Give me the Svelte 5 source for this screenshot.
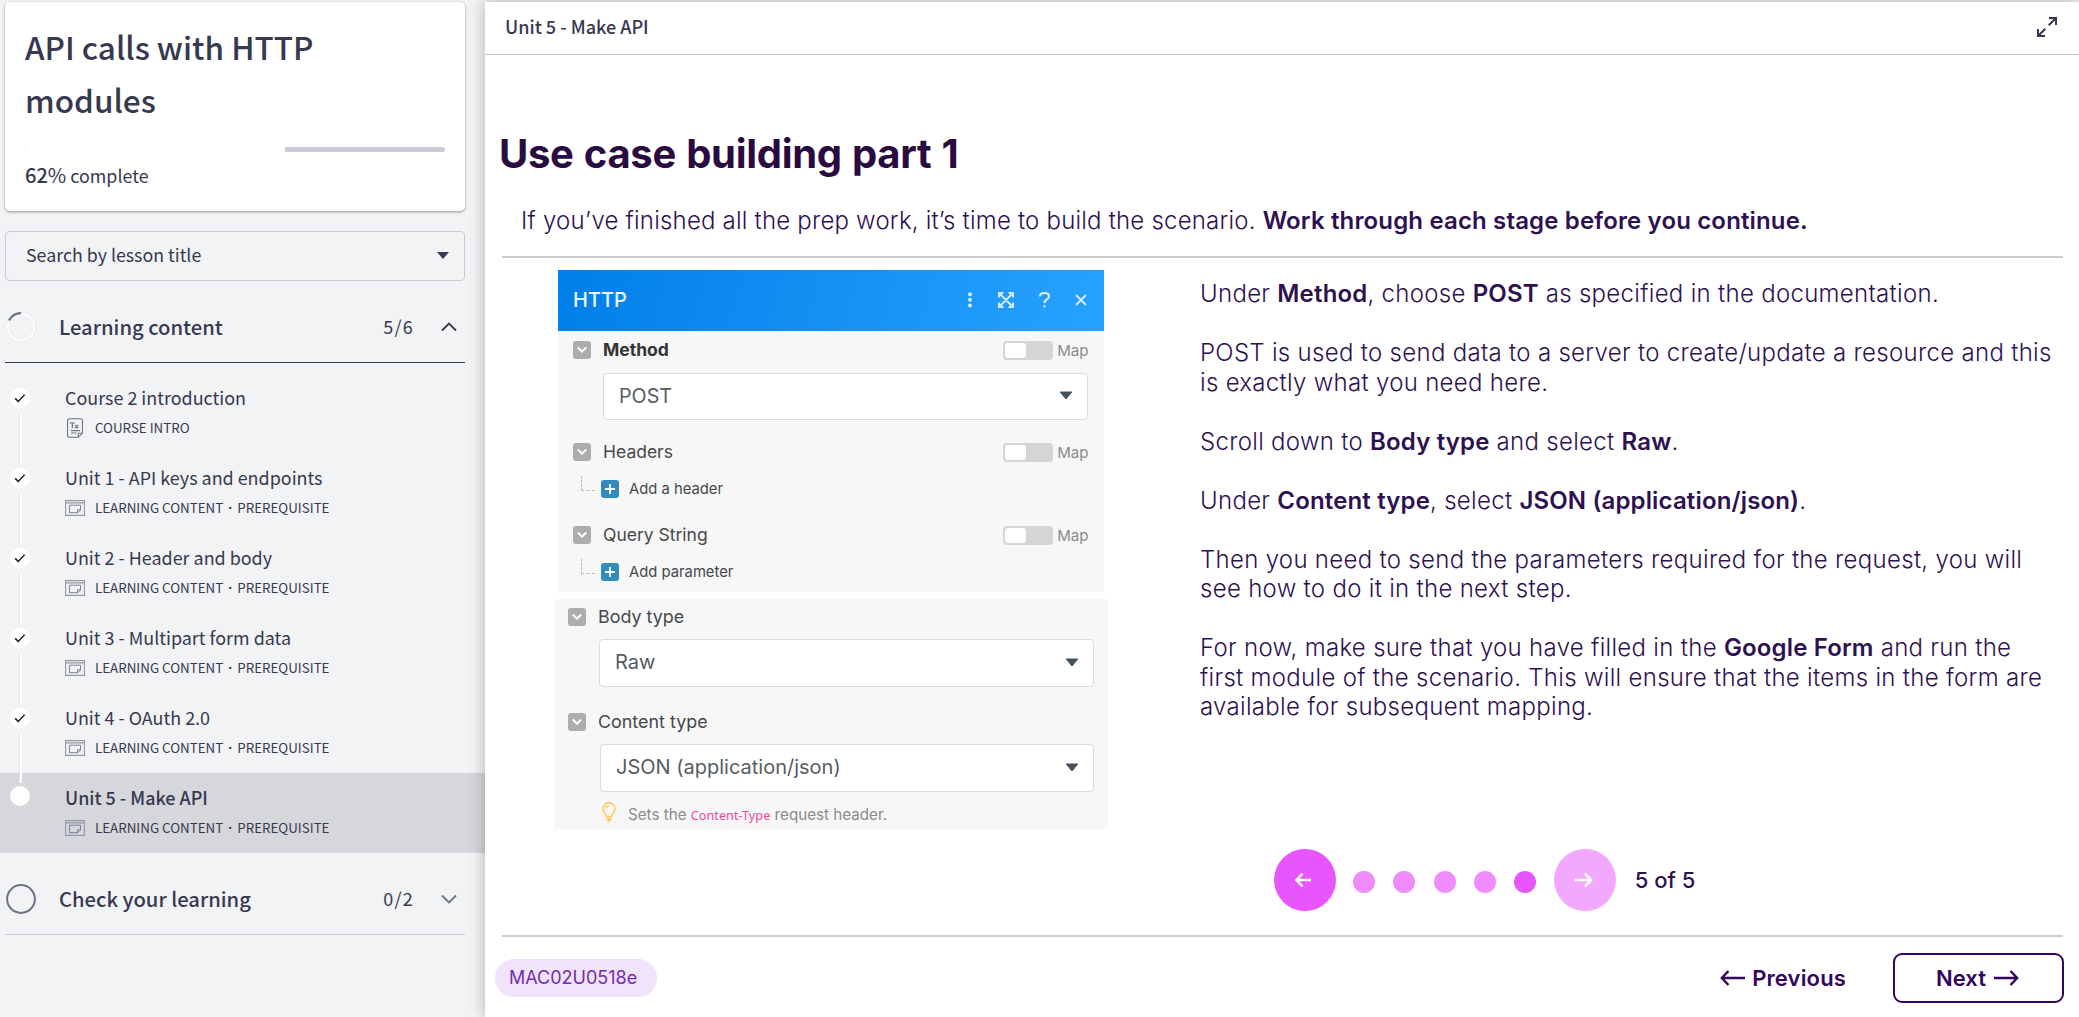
<script>
  const lessons = [
    { title: 'Course 2 introduction', meta: ['COURSE INTRO'], kind: 'text', state: 'done' },
    { title: 'Unit 1 - API keys and endpoints', meta: ['LEARNING CONTENT', 'PREREQUISITE'], kind: 'slide', state: 'done' },
    { title: 'Unit 2 - Header and body', meta: ['LEARNING CONTENT', 'PREREQUISITE'], kind: 'slide', state: 'done' },
    { title: 'Unit 3 - Multipart form data', meta: ['LEARNING CONTENT', 'PREREQUISITE'], kind: 'slide', state: 'done' },
    { title: 'Unit 4 - OAuth 2.0', meta: ['LEARNING CONTENT', 'PREREQUISITE'], kind: 'slide', state: 'done' },
    { title: 'Unit 5 - Make API', meta: ['LEARNING CONTENT', 'PREREQUISITE'], kind: 'slide', state: 'current' }
  ];
  const dots = [1, 2, 3, 4, 5];
  const current = 5;
  const progress = 62;
</script>

{#snippet fold()}
  <svg class="fold" viewBox="0 0 18 18"><rect width="18" height="18" rx="3" fill="#adadad" /><path d="M4.8 6.500l4.2 4.2 4.200-4.200" fill="none" stroke="#fff" stroke-width="2" /></svg>
{/snippet}

{#snippet mapToggle()}
  <span class="toggle"><span class="knob"></span></span><span class="map">Map</span>
{/snippet}

{#snippet add(label)}
  <div class="add">
    <span class="branch"></span>
    <svg class="plus" viewBox="0 0 18 18"><rect width="18" height="18" rx="3" fill="#2f8cbc" /><path d="M9 4v10M4 9h10" stroke="#fff" stroke-width="1.8" /></svg>
    <span>{label}</span>
  </div>
{/snippet}

{#snippet caret()}
  <svg class="caret" viewBox="0 0 14 9"><path d="M1.2 1h11.6L7 8z" fill="#46505a" stroke="#46505a" stroke-linejoin="round" /></svg>
{/snippet}

<div class="page">
  <aside>
    <section class="course">
      <h1>API calls with HTTP modules</h1>
      <div class="bar"><div class="fill" style="width:{progress - 0.15}%"></div></div>
      <p><b>{progress}<span>%</span></b> complete</p>
    </section>

    <div class="search">
      <span>Search by lesson title</span>
      <svg width="12" height="7" viewBox="0 0 12 7"><path d="M0 0h12L6 7z" fill="#36394f" /></svg>
    </div>

    <div class="group open">
      <svg class="ring" viewBox="0 0 30 30">
        <circle cx="15" cy="15" r="14.2" fill="none" stroke="#c9cbd0" stroke-width="1.2" stroke-dasharray="2 1.5" />
        <circle cx="15" cy="15" r="13.6" fill="none" stroke="#fff" stroke-width="2" />
        <path d="M3 8.5A13.7 13.7 0 0 1 15 1.2" fill="none" stroke="#6f7285" stroke-width="2.2" />
      </svg>
      <span class="name">Learning content</span>
      <span class="count">5/6</span>
      <svg class="chev" viewBox="0 0 16 10"><path d="M1 8.5l7-7 7 7" fill="none" stroke="#36394f" stroke-width="1.9" /></svg>
    </div>

    <div class="list">
      {#each lessons as l, i}
        <div class="lesson" class:current={l.state === 'current'}>
          <div class="mark">
            {#if l.state === 'done'}
              <svg width="20" height="20" viewBox="0 0 20 20"><circle cx="10" cy="10" r="10" fill="#fff" /><path d="M5.2 10.4l3 3 6.4-6.6" fill="none" stroke="#222" stroke-width="1.5" /></svg>
            {:else}
              <svg width="20" height="20" viewBox="0 0 20 20"><circle cx="10" cy="10" r="10" fill="#fff" /></svg>
            {/if}
            {#if i < lessons.length - 1}<span class="link"></span>{/if}
          </div>
          <div class="info">
            <div class="title">{l.title}</div>
            <div class="meta">
              {#if l.kind === 'text'}
                <svg class="doc" viewBox="0 0 16 20" fill="none" stroke="#6f7285">
                  <path d="M2.5.7h11a2 2 0 0 1 2 2v12.6l-4 4h-9a2 2 0 0 1-2-2V2.700a2 2 0 0 1 2-2zM15.400 15.300h-4v4" stroke-width="1.1" />
                  <path d="M2.800 5h5M5.300 5v5.300M8 6.800l3.200 3.500M11.200 6.800L8 10.300M4 12.600h9M4 15h5.500" stroke-width="1.2" />
                </svg>
              {:else}
                <svg class="slide-ico" viewBox="0 0 20 16" fill="none" stroke="#9597a8">
                  <path d="M.6.6h18.800v14.800H.6zM.6 2.900h18.800" stroke-width="1.1" />
                  <path d="M4.500 5.200h11v5l-2.800 2.500H4.500zM15.500 9.800h-3v3" stroke="#7d8093" stroke-width="1" />
                </svg>
              {/if}
              {#each l.meta as m, k}{#if k > 0}<span class="sep">·</span>{/if}<span>{m}</span>{/each}
            </div>
          </div>
        </div>
      {/each}
    </div>

    <div class="group">
      <svg class="ring" viewBox="0 0 30 30"><circle cx="15" cy="15" r="13.900" fill="none" stroke="#6f7285" stroke-width="2" /></svg>
      <span class="name">Check your learning</span>
      <span class="count">0/2</span>
      <svg class="chev" viewBox="0 0 16 10"><path d="M1 1.500l7 7 7-7" fill="none" stroke="#6f7285" stroke-width="1.900" /></svg>
    </div>
  </aside>

  <main>
    <header>
      <span>Unit 5 - Make API</span>
      <svg width="20" height="20" viewBox="0 0 20 20" fill="none" stroke="#36394f" stroke-width="2"><path d="M12 1h7v7M19 1l-7.300 7.300M8 19H1v-7M1 19l7.300-7.300" /></svg>
    </header>

    <h2>Use case building part 1</h2>
    <p class="lead">If you’ve finished all the prep work, it’s time to build the scenario. <strong>Work through each stage before you continue.</strong></p>
    <hr />

    <div class="cols">
      <div class="shots">
        <section class="http">
          <div class="top">
            <span>HTTP</span>
            <svg width="6" height="16" viewBox="0 0 6 16" fill="#d3eaff"><circle cx="3" cy="2.200" r="2" /><circle cx="3" cy="7.800" r="2" /><circle cx="3" cy="13.400" r="2" /></svg>
            <svg class="i2" width="16" height="16" viewBox="0 0 16 16" fill="none" stroke="#d3eaff" stroke-width="1.900"><path d="M2 2l12 12M14 2L2 14M1 5.500V1h4.500M10.500 1H15v4.500M15 10.500V15h-4.500M5.500 15H1v-4.500" /></svg>
            <svg class="i3" width="11" height="16" viewBox="0 0 11 16" fill="none" stroke="#d3eaff" stroke-width="2.200"><path d="M1 4.600C1 2.300 2.800 1 5.400 1S10 2.400 10 4.500C10 7.600 5.500 7.200 5.500 11M5.500 13.200v2.300" /></svg>
            <svg class="i4" width="12" height="12" viewBox="0 0 12 12" fill="none" stroke="#d3eaff" stroke-width="1.900"><path d="M1 1l10 10M11 1L1 11" /></svg>
          </div>
          <div class="field">{@render fold()}<b>Method</b>{@render mapToggle()}</div>
          <div class="select">POST{@render caret()}</div>
          <div class="field headers">{@render fold()}<span>Headers</span>{@render mapToggle()}</div>
          {@render add('Add a header')}
          <div class="field query">{@render fold()}<span>Query String</span>{@render mapToggle()}</div>
          {@render add('Add parameter')}
        </section>

        <section class="bodytype">
          <div class="field">{@render fold()}<span>Body type</span></div>
          <div class="select raw">Raw{@render caret()}</div>
          <div class="field ctype">{@render fold()}<span>Content type</span></div>
          <div class="select json">JSON (application/json){@render caret()}</div>
          <div class="hint">
            <svg width="14" height="20" viewBox="0 0 14 20" fill="none" stroke="#fdc95c" stroke-width="1.500"><path d="M4.400 14.500C4.400 11.500 1 10.500 1 6.700a6 6 0 0 1 12 0c0 3.800-3.400 4.800-3.400 7.800zM4 6.500A3 3 0 0 1 7 3.700" /><path d="M4.500 17h5M5.500 18.800h3" stroke-width="2" /></svg>
            <span>Sets the <code>Content-Type</code> request header.</span>
          </div>
        </section>
      </div>

      <div class="steps">
        <p>Under <strong>Method</strong>, choose <strong>POST</strong> as specified in the documentation.</p>
        <p>POST is used to send data to a server to create/update a resource and this<br />is exactly what you need here.</p>
        <p>Scroll down to <strong>Body type</strong> and select <strong>Raw</strong>.</p>
        <p>Under <strong>Content type</strong>, select <strong>JSON (application/json)</strong>.</p>
        <p>Then you need to send the parameters required for the request, you will<br />see how to do it in the next step.</p>
        <p>For now, make sure that you have filled in the <strong>Google Form</strong> and run the<br />first module of the scenario. This will ensure that the items in the form are<br />available for subsequent mapping.</p>
      </div>
    </div>

    <nav class="pager">
      <svg width="62" height="62" viewBox="0 0 62 62"><circle cx="31" cy="31" r="31" fill="#e755ff" /><path d="M37 31H22.500M28.500 24.700L22.300 31l6.200 6.300" fill="none" stroke="#fff" stroke-width="2.500" /></svg>
      <div class="dots">{#each dots as d}<span class:on={d === current}></span>{/each}</div>
      <svg width="62" height="62" viewBox="0 0 62 62"><circle cx="31" cy="31" r="31" fill="#f2a8ff" /><path d="M20.500 31H37M31 24.700l6.200 6.300-6.200 6.300" fill="none" stroke="#fff" stroke-width="2.500" /></svg>
      <span class="of">5 of 5</span>
    </nav>
    <hr />

    <footer>
      <span class="code">MAC02U0518e</span>
      <div class="prev">
        <svg width="25" height="16" viewBox="0 0 25 16"><path d="M25 8H2M8.500 1L1.800 8l6.700 7" fill="none" stroke="#32065c" stroke-width="2.400" /></svg>
        <span>Previous</span>
      </div>
      <div class="next">
        <span>Next</span>
        <svg width="25" height="16" viewBox="0 0 25 16"><path d="M0 8h23M16.500 1l6.700 7-6.700 7" fill="none" stroke="#32065c" stroke-width="2.400" /></svg>
      </div>
    </footer>
  </main>
</div>

<style>
  :global(body) { background: #f2f3f5; overflow: hidden; }
  .page {
    display: flex;
    height: 1017px;
    font-family: 'Noto Sans CJK SC', sans-serif;
    color: #36394f;
    background: #f2f3f5;
  }
  h1, h2, p { margin: 0; }
  svg { flex: none; display: block; }

  aside { width: 485px; flex: none; box-sizing: border-box; }
  .course {
    margin: 2px 20px 0 5px;
    height: 209px;
    padding: 18px 20px 0;
    box-sizing: border-box;
    border-radius: 5px;
    background: #fff;
    box-shadow: 0 1px 3px rgba(0, 0, 0, 0.4);
  }
  h1 { font-size: 31.5px; line-height: 53px; font-weight: 500; }
  .bar { height: 5px; margin-top: 21px; border-radius: 3px; background: #cacbd6; overflow: hidden; }
  .fill { height: 5px; background: #fff; }
  .course p { margin-top: 11px; font-size: 17.9px; line-height: 24px; }
  .course b { font-weight: 500; font-size: 20px; }
  .course b span { font-weight: 400; }
  .search {
    display: flex;
    align-items: center;
    justify-content: space-between;
    margin: 20px 20px 0 5px;
    height: 50px;
    box-sizing: border-box;
    padding: 0 15px 2px 20px;
    border: 1px solid #c8cad6;
    border-radius: 4px;
    font-size: 17.8px;
  }
  .search span { margin-top: -2px; }
  .group {
    display: flex;
    align-items: center;
    margin: 12px 20px 0 5px;
    height: 70px;
    box-sizing: border-box;
    border-bottom: 1px solid #c8cad6;
    line-height: 30px;
  }
  .group.open { border-color: #36394f; }
  .ring { width: 30px; height: 30px; margin-left: 1px; margin-top: -1px; }
  .name { margin-left: 23px; margin-top: -2px; font-size: 20.200px; font-weight: 500; flex: 1; }
  .count { font-size: 18px; letter-spacing: 1.200px; margin-top: -3px; }
  .chev { width: 16px; height: 10px; margin: -2px 8px 0 27px; }

  .list { padding-top: 10px; }
  .lesson { display: flex; height: 80px; }
  .lesson.current { background: #d6d7db; }
  .mark { position: relative; width: 65px; box-sizing: border-box; padding: 15px 0 0 10px; }
  .current .mark { padding-top: 13px; }
  .link {
    position: absolute;
    left: 19px;
    top: 41px;
    width: 2px;
    height: 49px;
    background: #fff;
    border-left: 1px solid #e6e7ea;
    z-index: 1;
  }
  .info { padding-top: 12px; }
  .title { font-size: 17.930px; line-height: 24px; white-space: nowrap; }
  .current .title { font-weight: 500; }
  .meta { display: flex; align-items: center; margin-top: 9px; font-size: 13.350px; line-height: 20px; }
  .slide-ico { width: 20px; height: 16px; margin-right: 10px; }
  .doc { width: 16px; height: 20px; margin: 0 12px 0 2px; }
  .sep { width: 14px; text-align: center; font-family: 'Open Sans', sans-serif; font-weight: 700; }

  main {
    flex: 1;
    margin-top: 2px;
    height: 1015px;
    background: #fff;
    box-shadow: 0 0 15px rgba(0, 0, 0, 0.28);
    font-family: Inter, sans-serif;
    color: #2d1150;
    z-index: 2;
  }
  header {
    display: flex;
    align-items: center;
    justify-content: space-between;
    height: 53px;
    box-sizing: border-box;
    padding: 0 22px 2px 20px;
    border-bottom: 1px solid #c8c8d2;
    font: 500 18.050px/30px 'Noto Sans CJK SC', sans-serif;
    color: #36394f;
  }
  header span { margin-top: -2px; }
  h2 {
    margin: 74px 0 0 14px;
    font-size: 40px;
    line-height: 50px;
    font-weight: 700;
    letter-spacing: -0.300px;
    word-spacing: 1px;
    color: #290b42;
  }
  .lead {
    margin: 27px 0 0 36px;
    font-size: 24px;
    line-height: 30px;
    font-weight: 300;
    letter-spacing: 0.200px;
    white-space: nowrap;
  }
  strong { font-weight: 600; letter-spacing: 0.150px; }
  hr { margin: 20px 16px 0 17px; height: 2px; border: 0; background: #d2ccd1; }

  .cols { display: flex; height: 571px; }
  .shots { width: 553px; margin-left: 70px; padding-top: 12px; font-size: 18px; color: #45484c; }
  .http { margin: 0 4px 0 3px; height: 322px; background: #f7f7f7; }
  .top {
    display: flex;
    align-items: center;
    height: 61px;
    padding: 0 17px 0 15px;
    background: linear-gradient(105deg, #007fe8, #28a2ff);
    box-sizing: border-box;
    padding-bottom: 2px;
    color: #eef7ff;
    font-size: 20px;
    font-weight: 500;
  }
  .top span { flex: 1; letter-spacing: 0; }
  .i2 { margin-left: 25px; }
  .i3 { margin-left: 25px; }
  .i4 { margin-left: 25px; }
  .field { display: flex; align-items: center; height: 38px; padding-left: 15px; font-size: 17.500px; }
  .field > b, .field > :global(span:nth-child(2)) { margin: -2px 0 0 12px; flex: 1; }
  .field b { color: #333; font-weight: 700; }
  .fold { width: 18px; height: 18px; }
  .toggle {
    display: block;
    width: 50px;
    height: 19px;
    padding: 2px;
    box-sizing: border-box;
    border-radius: 4px;
    background: #d5d5d5;
  }
  .knob { display: block; width: 21px; height: 15px; border-radius: 3px; background: #fff; }
  .map { margin: 0 15.500px 0 4px; font-size: 15.100px; color: #8b8b8b; }
  .select {
    display: flex;
    align-items: center;
    justify-content: space-between;
    margin: 4px 16px 0 45px;
    height: 47px;
    box-sizing: border-box;
    padding: 0 14px 2px 15px;
    border: 1px solid #dcdcdc;
    border-radius: 4px;
    background: #fff;
    font-size: 19.700px;
    color: #555c63;
  }
  .caret { width: 14px; height: 9px; }
  .headers { margin-top: 13px; }
  .query { margin-top: 12px; }
  .add { display: flex; align-items: center; height: 32px; padding: 2px 0 0 23px; box-sizing: border-box; height: 33px; font-size: 14.800px; }
  .branch { width: 13px; height: 14px; margin-top: -11px; border-left: 1px dashed #bbb; border-bottom: 1px dashed #bbb; }
  .plus { width: 18px; height: 18px; margin: 0 10px 0 6px; }

  .bodytype { margin-top: 7px; height: 230px; background: #f7f7f7; }
  .bodytype .field { height: 36px; padding-left: 13px; font-size: 17.900px; }
  .bodytype .select { margin: 4px 14px 0 44px; height: 48px; font-size: 20px; }
  .bodytype .ctype { margin-top: 17px; }
  .bodytype .json { margin: 4px 14px 0 45px; height: 48px; }
  .hint { display: flex; align-items: center; height: 38px; padding-left: 47px; margin-top: 1px; font-size: 15.200px; color: #8b8b8b; }
  .hint span { margin-left: 12px; padding-top: 5px; }
  code { font-family: 'Noto Sans', sans-serif; font-size: 12.700px; color: #ee4a9b; }

  .steps { margin-left: 92px; padding-top: 21px; font-size: 24px; line-height: 29.500px; font-weight: 300; letter-spacing: 0.300px; white-space: nowrap; }
  .steps p { margin-bottom: 29.500px; }

  .pager { display: flex; align-items: center; height: 62px; margin: 20px 0 0 789px; }
  .dots { display: flex; gap: 18.300px; margin: 4px 18px 0 17px; }
  .dots span { width: 22px; height: 22px; border-radius: 50%; background: #ee8bfd; }
  .dots .on { background: #e755ff; }
  .of { margin-left: 18.500px; font-size: 22px; font-weight: 500; }
  .pager + hr { margin-top: 24px; }

  footer { display: flex; align-items: center; height: 82px; padding: 0 15px 0 10px; font-size: 22px; font-weight: 600; color: #32065c; }
  .code {
    height: 38px;
    line-height: 38px;
    width: 162px;
    box-sizing: border-box;
    padding-left: 14px;
    border-radius: 19px;
    background: #f0e3fb;
    color: #732eaa;
    font-size: 18px;
    font-weight: 400;
  }
  .prev { display: flex; align-items: center; gap: 7px; margin-left: auto; letter-spacing: 0.150px; }
  .next {
    display: flex;
    align-items: center;
    justify-content: center;
    gap: 8px;
    width: 171px;
    height: 50px;
    margin-left: 47px;
    box-sizing: border-box;
    padding-right: 2px;
    border: 2px solid #32065c;
    border-radius: 9px;
  }
</style>
